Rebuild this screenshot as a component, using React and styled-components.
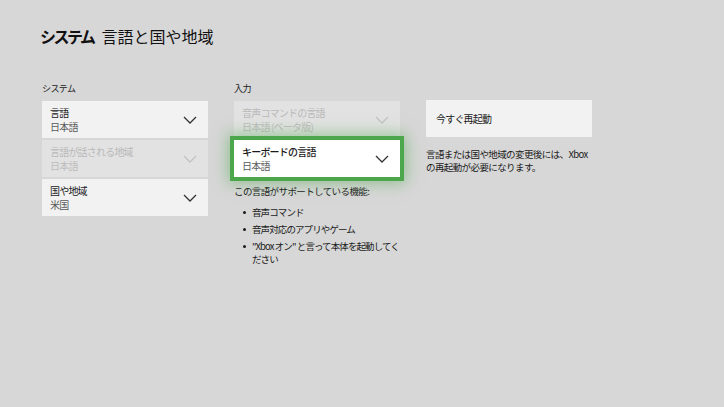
import React from 'react';
import styled, { createGlobalStyle } from 'styled-components';

const GlobalStyle = createGlobalStyle`
  html, body {
    margin: 0;
    padding: 0;
    background: #d7d7d7;
  }
  body {
    font-family: "Noto Sans CJK JP", "Noto Sans", sans-serif;
    color: #1a1a1a;
  }
`;

const Page = styled.div`
  width: 724px;
  height: 407px;
  box-sizing: border-box;
  padding: 26px 0 0 40px;
  background: #d7d7d7;
  overflow: hidden;
`;

const Title = styled.h1`
  margin: 0;
  font-size: 16px;
  font-weight: 400;
  line-height: 20px;
  color: #111;
  display: flex;
  gap: 8px;
`;

const TitleStrong = styled.span`
  font-weight: 700;
  letter-spacing: -2.5px;
`;

const Columns = styled.div`
  display: grid;
  grid-template-columns: repeat(3, 166px);
  column-gap: 26px;
  margin: 37px 0 0 2px;
`;

const Column = styled.div`
  display: flex;
  flex-direction: column;
`;

const Label = styled.div`
  font-size: 9px;
  line-height: 12px;
  height: 12px;
  margin-bottom: 6px;
  letter-spacing: -0.6px;
  color: ${({ $hidden }) => ($hidden ? 'transparent' : '#1a1a1a')};
`;

const Stack = styled.div`
  display: flex;
  flex-direction: column;
  gap: 2px;
`;

const Card = styled.div`
  position: relative;
  height: 37px;
  box-sizing: border-box;
  padding: 0 8px;
  display: flex;
  align-items: center;
  justify-content: space-between;
  background: ${({ $disabled }) => ($disabled ? '#e2e2e2' : '#f2f2f2')};
  color: ${({ $disabled }) => ($disabled ? '#b9b9b9' : '#1a1a1a')};
  ${({ $focused }) =>
    $focused &&
    `
    background: #ffffff;
    outline: 4px solid #4ca64c;
    box-shadow: 0 0 14px 6px rgba(76, 166, 76, 0.5);
    z-index: 2;
  `}
`;

const CardText = styled.div`
  display: flex;
  flex-direction: column;
  letter-spacing: -0.8px;
  padding-top: 1px;
`;

const CardName = styled.span`
  font-size: 10px;
  line-height: 14px;
  font-weight: ${({ $bold }) => ($bold ? 500 : 400)};
`;

const CardValue = styled.span`
  font-size: 10px;
  line-height: 14px;
  color: ${({ $disabled }) => ($disabled ? '#bdbdbd' : '#5a5a5a')};
`;

const Chevron = ({ disabled }) => (
  <svg width="14" height="8" viewBox="0 0 14 8" style={{ marginRight: 3 }}>
    <path
      d="M1 1 L7 7 L13 1"
      fill="none"
      stroke={disabled ? '#c2c2c2' : '#333'}
      strokeWidth="1.3"
    />
  </svg>
);

const Button = styled.div`
  height: 37px;
  box-sizing: border-box;
  padding: 0 10px;
  display: flex;
  align-items: center;
  background: #f2f2f2;
  font-size: 10px;
  letter-spacing: -0.8px;
  margin-top: -1px;
`;

const Note = styled.p`
  margin: 11px 0 0;
  font-size: 9.5px;
  line-height: 13px;
  letter-spacing: -0.6px;
  color: #1a1a1a;
`;

const Features = styled.div`
  margin-top: 8px;
  font-size: 9.5px;
  line-height: 13px;
  letter-spacing: -0.6px;
`;

const List = styled.ul`
  list-style: none;
  margin: 8px -6px 0 0;
  padding: 0 0 0 9px;
  display: flex;
  flex-direction: column;
  gap: 4px;
  letter-spacing: -0.9px;
`;

const Item = styled.li`
  position: relative;
  padding-left: 9px;
  &::before {
    content: '';
    position: absolute;
    left: 0;
    top: 5px;
    width: 3px;
    height: 3px;
    border-radius: 50%;
    background: #1a1a1a;
  }
`;

function SelectCard({ name, value, disabled, focused, bold }) {
  return (
    <Card $disabled={disabled} $focused={focused}>
      <CardText>
        <CardName $bold={bold}>{name}</CardName>
        <CardValue $disabled={disabled}>{value}</CardValue>
      </CardText>
      <Chevron disabled={disabled} />
    </Card>
  );
}

export default function App() {
  return (
    <>
      <GlobalStyle />
      <Page>
        <Title>
          <TitleStrong>システム</TitleStrong>
          <span>言語と国や地域</span>
        </Title>
        <Columns>
          <Column>
            <Label>システム</Label>
            <Stack>
              <SelectCard name="言語" value="日本語" />
              <SelectCard name="言語が話される地域" value="日本語" disabled />
              <SelectCard name="国や地域" value="米国" />
            </Stack>
          </Column>
          <Column>
            <Label>入力</Label>
            <Stack>
              <SelectCard name="音声コマンドの言語" value="日本語 (ベータ版)" disabled />
              <SelectCard name="キーボードの言語" value="日本語" focused bold />
            </Stack>
            <Features>
              この言語がサポートしている機能:
              <List>
                <Item>音声コマンド</Item>
                <Item>音声対応のアプリやゲーム</Item>
                <Item>"Xbox オン" と言って本体を起動してください</Item>
              </List>
            </Features>
          </Column>
          <Column>
            <Label $hidden>-</Label>
            <Button>今すぐ再起動</Button>
            <Note>言語または国や地域の変更後には、Xbox の再起動が必要になります。</Note>
          </Column>
        </Columns>
      </Page>
    </>
  );
}
